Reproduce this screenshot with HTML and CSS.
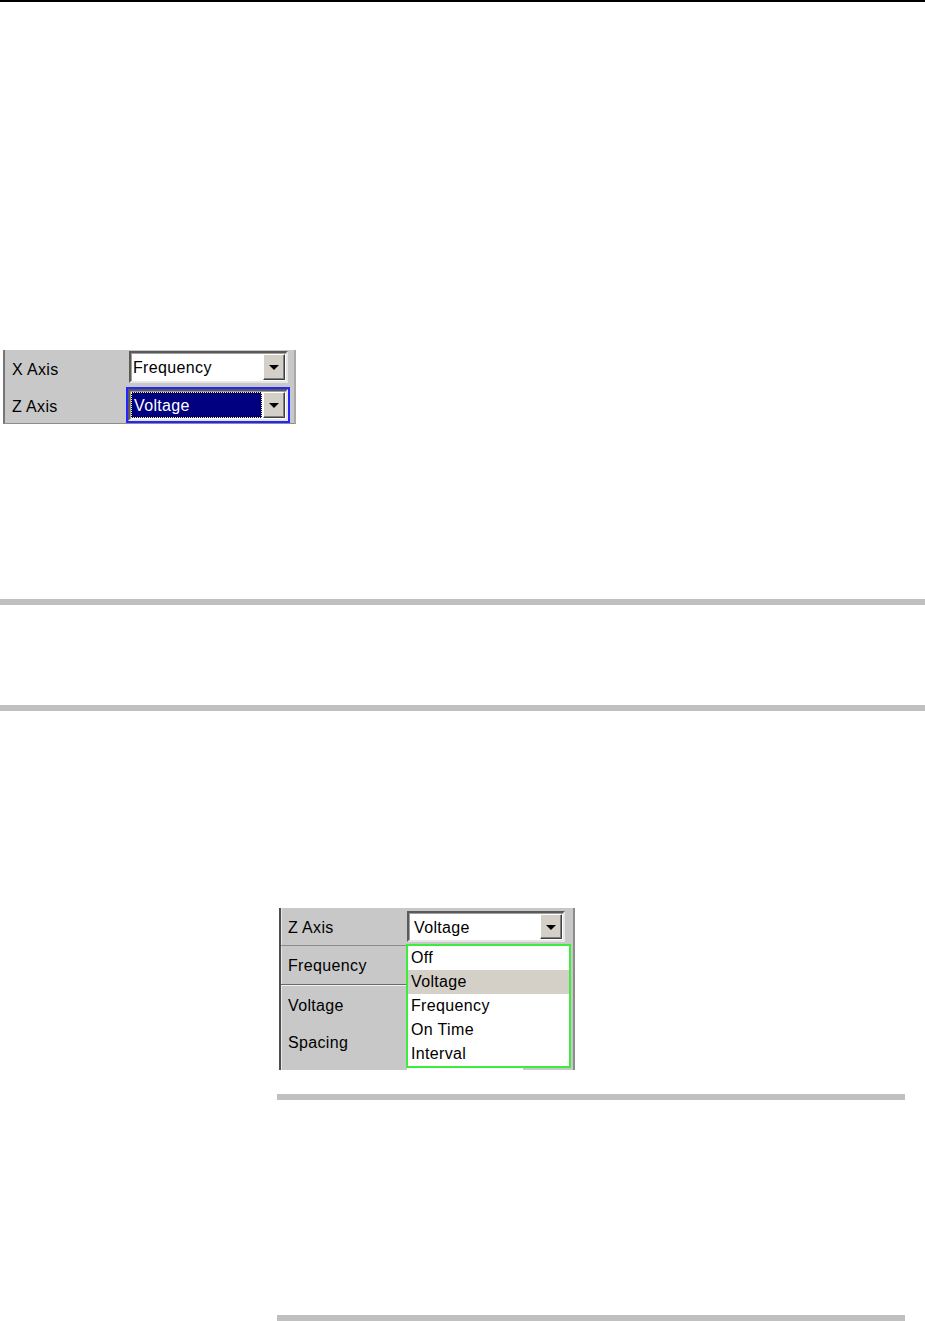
FILE: index.html
```html
<!DOCTYPE html>
<html>
<head>
<meta charset="utf-8">
<title>Axis settings</title>
<link rel="stylesheet" href="styles.css">
</head>
<body>
<div class="top-rule"></div>

<div class="panel panel1">
  <div class="label row-a">X Axis</div>
  <div class="cell row-a">
    <div class="dd dd-w1">
      <div class="dd-value">Frequency</div>
      <div class="dd-btn"><span class="arrow"></span></div>
    </div>
  </div>
  <div class="label row-b">Z Axis</div>
  <div class="cell row-b">
    <div class="focus-ring">
      <div class="dd dd-w1">
        <div class="dd-value selected"><span class="focus-text">Voltage</span></div>
        <div class="dd-btn"><span class="arrow"></span></div>
      </div>
    </div>
  </div>
</div>

<div class="bar bar-full bar1"></div>
<div class="bar bar-full bar2"></div>

<div class="panel panel2">
  <div class="p2-row p2-r1">
    <div class="label">Z Axis</div>
    <div class="dd dd-w2">
      <div class="dd-value">Voltage</div>
      <div class="dd-btn"><span class="arrow"></span></div>
    </div>
  </div>
  <div class="p2-row p2-r2">
    <div class="label">Frequency</div>
  </div>
  <div class="p2-row p2-r3">
    <div class="label">Voltage</div>
  </div>
  <div class="p2-row p2-r4">
    <div class="label">Spacing</div>
  </div>
  <div class="p2-row p2-r5">
    <div class="stub"></div>
  </div>

  <ul class="list">
    <li>Off</li>
    <li class="hl">Voltage</li>
    <li>Frequency</li>
    <li>On Time</li>
    <li>Interval</li>
  </ul>
</div>

<div class="bar bar-part bar3"></div>
<div class="bar bar-part bar4"></div>
</body>
</html>
```

FILE: styles.css
```css
html, body {
  margin: 0;
  padding: 0;
  background: #ffffff;
}
body {
  width: 925px;
  height: 1321px;
  overflow: hidden;
  font-family: "Liberation Sans", Arial, sans-serif;
  font-size: 16px;
  letter-spacing: 0.35px;
  color: #000;
}

.top-rule {
  height: 2px;
  background: #000;
}

.panel {
  box-sizing: border-box;
  background: #c8c8c8;
}

/* ---------- panel 1 ---------- */
.panel1 {
  margin: 348px 0 0 3px;
  width: 293px;
  height: 74px;
  border-left: 2px solid #767676;
  border-right: 2px solid #a9a9a9;
  border-bottom: 1px solid #8c8c8c;
  display: grid;
  grid-template-columns: 121px 1fr;
  grid-template-rows: 37px 36px;
}
.label {
  display: flex;
  align-items: center;
  padding-left: 7px;
  white-space: nowrap;
}
.panel1 .row-a.label { padding-top: 2px; }
.panel1 .row-b.label { padding-top: 3px; }
.cell {
  display: flex;
  align-items: flex-start;
}
.panel1 .row-a.cell { padding: 1px 0 0 3px; }
.panel1 .row-b.cell { padding: 0; }

.dd {
  box-sizing: border-box;
  display: flex;
  background: #fff;
  border: 2px solid;
  border-color: #5a5a5a #e6e6e6 #e6e6e6 #5a5a5a;
  box-shadow: inset 1px 1px 0 #a0a0a0;
}
.dd-w1 { width: 159px; height: 32px; }
.dd-w2 { width: 158px; height: 31px; margin: 3px 0 0 2px; }

.dd-value {
  flex: 1;
  display: flex;
  align-items: center;
  padding: 2px 0 0 2px;
  white-space: nowrap;
}
.dd-w2 .dd-value { padding-left: 5px; }
.dd-btn {
  box-sizing: border-box;
  width: 22px;
  margin: 1px 1px 1px 0;
  background: #d4d0c8;
  border: 1px solid;
  border-color: #ffffff #404040 #404040 #ffffff;
  box-shadow: inset -1px -1px 0 #808080;
  display: flex;
  align-items: center;
  justify-content: center;
}
.arrow {
  width: 0;
  height: 0;
  border-left: 5px solid transparent;
  border-right: 5px solid transparent;
  border-top: 5px solid #000;
  margin-top: 1px;
}

.focus-ring {
  box-sizing: border-box;
  width: 164px;
  height: 36px;
  border: 2px solid #2424ff;
}
.focus-ring .dd { width: 160px; height: 32px; }
.dd-value.selected {
  margin: 1px;
  padding: 2px 0 0 0;
  background: #000080;
  color: #fff;
  outline: 1px dotted #ffff66;
  outline-offset: -1px;
}
.focus-text { padding-left: 3px; }

/* ---------- bars ---------- */
.bar { background: #c0c0c0; height: 6px; }
.bar1 { margin-top: 175px; }
.bar2 { margin-top: 100px; }
.bar-part { margin-left: 277px; width: 628px; }
.bar3 { margin-top: 24px; }
.bar4 { margin-top: 215px; }

/* ---------- panel 2 ---------- */
.panel2 {
  position: relative;
  margin: 197px 0 0 279px;
  width: 296px;
  height: 162px;
  border-left: 2px solid #4e4e4e;
  border-right: 2px solid #8c8c8c;
  box-shadow: inset 1px 0 0 #e8e8e8;
}
.p2-row {
  display: flex;
  align-items: flex-start;
}
.p2-row .label { width: 124px; box-sizing: border-box; }
.p2-r1 { height: 37px; }
.p2-r1 .label { height: 37px; padding-top: 2px; }
.p2-r2 {
  box-sizing: border-box;
  height: 40px;
  border-top: 1px solid #8c8c8c;
  border-bottom: 1px solid #6a6a6a;
  box-shadow: 0 1px 0 #f2f2f2;
  margin-right: 160px;
}
.p2-r2 .label { height: 38px; padding-top: 2px; }
.p2-r3 { height: 40px; }
.p2-r3 .label { height: 40px; padding-top: 1px; }
.p2-r4 { height: 35px; }
.p2-r4 .label { height: 35px; padding-top: 1px; }
.p2-r5 { height: 10px; }
.stub {
  margin: 4px 0 0 126px;
  width: 116px;
  height: 6px;
  background: #fff;
}

.list {
  position: absolute;
  left: 125px;
  top: 36px;
  box-sizing: border-box;
  width: 165px;
  height: 124px;
  margin: 0;
  padding: 0;
  list-style: none;
  background: #fff;
  border: 2px solid #3ded3d;
}
.list li {
  height: 24px;
  line-height: 24px;
  padding-left: 3px;
  white-space: nowrap;
}
.list li.hl { background: #d4d0c8; }
```
